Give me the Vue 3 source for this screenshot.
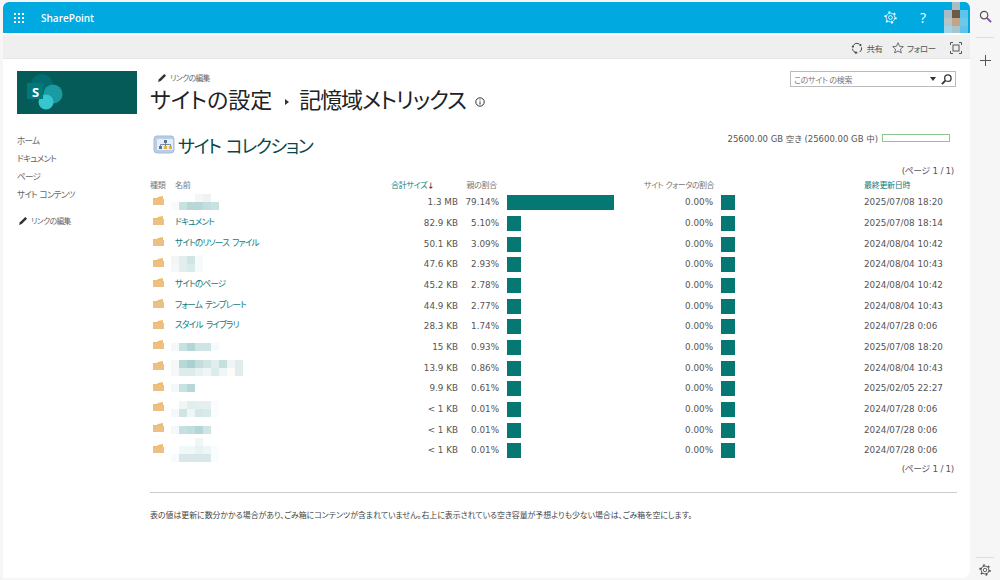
<template>
  <div class="page">
    <div class="main">
      <header class="suite">
        <svg class="waffle" width="12" height="12" viewBox="0 0 12 12" fill="#fff">
          <template v-for="y in [1, 5, 9]" :key="y">
            <rect v-for="x in [1, 5, 9]" :key="x" :x="x" :y="y" width="2" height="2" />
          </template>
        </svg>
        <span class="brand">SharePoint</span>
        <span class="spacer"></span>
        <svg width="13" height="13" viewBox="0 0 24 24" fill="none" stroke="#fff">
          <circle cx="12" cy="12" r="3.500" stroke-width="1.600" />
          <circle cx="12" cy="12" r="8" stroke-width="1.600" />
          <circle cx="12" cy="12" r="10" stroke-width="3" stroke-dasharray="3.500 6.970" />
        </svg>
        <span class="help">?</span>
        <div class="avatar">
          <div v-for="(row, r) in avatar" :key="r" class="mosaic-row">
            <i v-for="(c, k) in row" :key="k" :style="{ background: c }"></i>
          </div>
        </div>
      </header>

      <div class="ribbon">
        <svg width="12" height="12" viewBox="0 0 16 16" fill="none" stroke="#444" stroke-width="1.300">
          <path d="M3 4.500A6 6 0 0 1 11 2.500M14 7a6 6 0 0 1-2.500 6.500M8.500 14.500A6 6 0 0 1 2 9" />
          <circle cx="2.500" cy="6" r="1.500" fill="#444" stroke="none" />
          <circle cx="12.500" cy="4" r="1.500" fill="#444" stroke="none" />
          <circle cx="6.500" cy="14" r="1.500" fill="#444" stroke="none" />
        </svg>
        <span class="rb-text">共有</span>
        <svg class="star" width="12" height="12" viewBox="0 0 16 16" fill="none" stroke="#555" stroke-width="1.100">
          <path d="M8 1l2.100 4.700 5 .5-3.800 3.300 1.100 5L8 12l-4.400 2.500 1.100-5L.9 6.200l5-.5z" />
        </svg>
        <span class="rb-text">フォロー</span>
        <svg class="focus" width="12" height="12" viewBox="0 0 12 12" fill="none" stroke="#555" stroke-width="1">
          <path d="M.5 3V.5H3M9 .5h2.500V3M11.500 9v2.500H9M3 11.500H.5V9" />
          <rect x="3" y="3" width="6" height="6" />
        </svg>
      </div>

      <div class="content">
        <aside class="nav">
          <div class="logo">
            <svg width="50" height="43" viewBox="0 0 50 43">
              <circle cx="25" cy="14" r="11" fill="#036c70" />
              <circle cx="36" cy="23" r="9.500" fill="#1a9ba1" />
              <circle cx="29" cy="31" r="7.500" fill="#37c6d0" />
              <rect x="10" y="12" width="16" height="16" fill="#03787c" />
            </svg>
            <span class="logo-s">S</span>
          </div>
          <ul class="nav-list">
            <li v-for="item in navItems" :key="item">{{ item }}</li>
          </ul>
          <div class="edit nav-edit">
            <svg width="9" height="9" viewBox="0 0 10 10" fill="#333"><path d="M0 10l1-3 6-6 2 2-6 6z" /></svg>
            リンクの編集
          </div>
        </aside>

        <section class="body">
          <div class="top">
            <div class="titles">
              <div class="edit">
                <svg width="9" height="9" viewBox="0 0 10 10" fill="#333"><path d="M0 10l1-3 6-6 2 2-6 6z" /></svg>
                リンクの編集
              </div>
              <h1>
                サイトの設定
                <svg class="sep" width="4" height="6" viewBox="0 0 4 6" fill="#333"><path d="M0 0l4 3-4 3z" /></svg>
                <span class="leaf">記憶域メトリックス</span>
                <svg class="info" width="10" height="10" viewBox="0 0 10 10" fill="none" stroke="#333">
                  <circle cx="5" cy="5" r="4.200" />
                  <path d="M5 4.500V7.500M5 2.500v1" />
                </svg>
              </h1>
            </div>
            <div class="search">
              <span class="search-text">このサイト の検索</span>
              <span class="caret"></span>
              <svg width="11" height="11" viewBox="0 0 12 12" fill="none" stroke="#333" stroke-width="1.400">
                <circle cx="7.500" cy="4.500" r="3.500" />
                <path d="M5 7L1 11" stroke-width="2" />
              </svg>
            </div>
          </div>

          <div class="collection">
            <div class="coll-title">
              <svg width="22" height="22" viewBox="0 0 22 22">
                <rect x="1" y="2" width="20" height="17" rx="3" fill="#b9cde6" stroke="#a9bcd6" />
                <rect x="4" y="5" width="16" height="11" rx="1" fill="#e8eef6" />
                <rect x="11" y="6" width="3" height="3" fill="#5a7497" />
                <rect x="6" y="12" width="3" height="3" fill="#5a7497" />
                <rect x="11" y="12" width="3" height="3" fill="#e0b040" />
                <rect x="16" y="12" width="3" height="3" fill="#e0b040" />
                <path d="M12.500 9v3M7.500 12v-1.500h10V12" fill="none" stroke="#5a7497" stroke-width=".800" />
              </svg>
              <h2>サイト コレクション</h2>
            </div>
            <div class="storage">
              <span>25600.00 GB 空き (25600.00 GB 中)</span>
              <div class="storage-bar"></div>
            </div>
          </div>

          <div class="pager pager-top">(ページ 1 / 1)</div>

          <div class="row head">
            <span>種類</span>
            <span>名前</span>
            <span class="link-head size-head">合計サイズ<b>↓</b></span>
            <span class="right">親の割合</span>
            <span></span>
            <span class="right quota">サイト クォータの割合</span>
            <span></span>
            <span class="link-head">最終更新日時</span>
          </div>
          <div v-for="(row, i) in rows" :key="i" class="row">
            <svg class="folder" width="11" height="10" viewBox="0 0 11 10">
              <path d="M0 2h4l1-1 5-1v9H0z" fill="#f0bc6c" />
              <path d="M0 3h11v6H0z" fill="#ecc084" />
            </svg>
            <div class="name">
              <a v-if="row.name">{{ row.name }}</a>
              <div v-else class="mosaic">
                <div v-for="(line, r) in row.blur" :key="r" class="mosaic-row">
                  <i v-for="(c, k) in line" :key="k" :style="{ background: c }"></i>
                </div>
              </div>
            </div>
            <span class="num">{{ row.size }}</span>
            <span class="num">{{ row.pct }}</span>
            <div class="bar-cell"><div class="bar" :style="{ width: row.bar + 'px' }"></div></div>
            <span class="num">0.00%</span>
            <div class="bar-cell"><div class="bar"></div></div>
            <span class="num date">{{ row.date }}</span>
          </div>

          <div class="pager pager-bottom">(ページ 1 / 1)</div>
          <hr />
          <p class="note">表の値は更新に数分かかる場合があり、ごみ箱にコンテンツが含まれていません。右上に表示されている空き容量が予想よりも少ない場合は、ごみ箱を空にします。</p>
        </section>
      </div>
    </div>

    <div class="rail">
      <svg width="13" height="13" viewBox="0 0 14 14" fill="none" stroke="#555" stroke-width="1.300">
        <circle cx="5.500" cy="5.500" r="4" />
        <path d="M8.500 8.500L13 13" stroke="#7a4fa3" stroke-width="2" />
      </svg>
      <div class="rail-line"></div>
      <svg class="plus" width="11" height="11" viewBox="0 0 11 11" stroke="#555">
        <path d="M5.500 0v11M0 5.500h11" />
      </svg>
      <span class="spacer"></span>
      <div class="rail-line"></div>
      <svg class="rail-gear" width="12" height="12" viewBox="0 0 24 24" fill="none" stroke="#444">
        <circle cx="12" cy="12" r="3.500" stroke-width="1.600" />
        <circle cx="12" cy="12" r="8" stroke-width="1.600" />
        <circle cx="12" cy="12" r="10" stroke-width="3" stroke-dasharray="3.500 6.970" />
      </svg>
    </div>
  </div>
</template>

<script setup>
const navItems = ["ホーム", "ドキュメント", "ページ", "サイト コンテンツ"];

const avatar = [
  ["#00a9e0", "#a9bcc2", "#00a9e0"],
  ["#a7bcc4", "#6b5a48", "#5cc5ec"],
  ["#b5c4c8", "#c4a487", "#6fc8e8"],
  ["#9fd4e8", "#a6c5cf", "#60c4ea"],
];

const w = "#ffffff";
const rows = [
  { blur: [[w, w, w, "#f6f6f6", "#f2f2f2", w], ["#f7fbfb", "#c8e2e2", "#b8d8d8", "#b8d8d8", "#c2dede", "#c8e2e2"]], size: "1.3 MB", pct: "79.14%", bar: 107, date: "2025/07/08 18:20" },
  { name: "ドキュメント", size: "82.9 KB", pct: "5.10%", bar: 14, date: "2025/07/08 18:14" },
  { name: "サイトのリソース ファイル", size: "50.1 KB", pct: "3.09%", bar: 14, date: "2024/08/04 10:42" },
  { blur: [["#f4f6f6", "#e0eeee", "#cfe4e4", "#f6fafa"], ["#f4f8f8", "#e0eeee", "#d8eaea", "#f6fafa"]], size: "47.6 KB", pct: "2.93%", bar: 14, date: "2024/08/04 10:43" },
  { name: "サイトのページ", size: "45.2 KB", pct: "2.78%", bar: 14, date: "2024/08/04 10:42" },
  { name: "フォーム テンプレート", size: "44.9 KB", pct: "2.77%", bar: 14, date: "2024/08/04 10:43" },
  { name: "スタイル ライブラリ", size: "28.3 KB", pct: "1.74%", bar: 14, date: "2024/07/28 0:06" },
  { blur: [["#f5f8f8", "#c8e2e2", "#b4d6d6", "#cfe4e4", "#cfe4e4", "#f6fafa"]], size: "15 KB", pct: "0.93%", bar: 14, date: "2025/07/08 18:20" },
  { blur: [["#f5f8f8", "#b8d8d8", "#a8d2d2", "#c4dcdc", "#d0e4e4", "#e2eeee", "#c4e0e0", "#eef5f5", "#e2ecec"], ["#f5f8f8", "#dcecec", "#dcecec", "#e8f0f0", "#eef6f6", "#dcecec", "#eef6f6", "#fbfcf8", "#e2ecec"]], size: "13.9 KB", pct: "0.86%", bar: 14, date: "2024/08/04 10:43" },
  { blur: [["#f4f8f8", "#c8e2e2", "#b8d8d8"]], size: "9.9 KB", pct: "0.61%", bar: 14, date: "2025/02/05 22:27" },
  { blur: [[w, "#eef6f6", "#e0eeee", "#e4f0f0", "#e4f0f0", "#fbfdfd"], ["#f4f8f8", "#d0e4e4", "#eef6f6", "#d4e8e8", "#d8eaea", "#fafdfd"]], size: "< 1 KB", pct: "0.01%", bar: 14, date: "2024/07/28 0:06" },
  { blur: [["#f5f8f8", "#c4e0e0", "#c0dede", "#b4d6d6", "#d0e4e4"]], size: "< 1 KB", pct: "0.01%", bar: 14, date: "2024/07/28 0:06" },
  { blur: [[w, w, w, "#eef6f6", w, w], [w, "#f0f8f8", "#f0f8f8", "#e8f4f4", "#eef6f6", "#fbfdfd"], ["#f8fbfb", "#d8e8e8", "#d8e8e8", "#d8e8e8", "#d8e8e8", "#f8fdfd"]], size: "< 1 KB", pct: "0.01%", bar: 14, date: "2024/07/28 0:06" },
];
</script>

<style>
html,
body {
  margin: 0;
  background: #f6f6f6;
}
</style>

<style scoped>
.page {
  display: flex;
  width: 1000px;
  height: 580px;
  overflow: hidden;
  box-sizing: border-box;
  padding: 2px 0 2px 3px;
  background: #f6f6f6;
  color: #555;
  font-family: "DejaVu Sans", "Noto Sans CJK JP", sans-serif;
  font-size: 8.8px;
}
.main {
  width: 967px;
  display: flex;
  flex-direction: column;
  background: #fff;
  border-radius: 6px 6px 8px 0;
  overflow: hidden;
}
.spacer {
  flex: 1;
}
.suite {
  height: 31px;
  flex: none;
  display: flex;
  align-items: center;
  background: #00a9e0;
  color: #fff;
}
.waffle {
  margin-left: 10px;
}
.brand {
  margin-left: 16px;
  font: 600 10px "Open Sans", sans-serif;
}
.help {
  margin: 0 18px 0 23px;
  font: 14px "Open Sans", sans-serif;
}
.avatar {
  margin: 0 2px 0 0;
  align-self: flex-start;
  height: 31px;
  overflow: hidden;
}
.avatar .mosaic-row i {
  height: 8px;
}
.ribbon {
  margin-top: 2px;
  height: 24px;
  flex: none;
  box-sizing: border-box;
  display: flex;
  align-items: center;
  justify-content: flex-end;
  padding: 2px 8px 0 0;
  background: #efefef;
  border-bottom: 1px dotted #ddd;
}
.rb-text {
  margin-left: 3px;
  color: #555;
  font: 8.5px "Noto Sans CJK JP", sans-serif;
  font-feature-settings: "palt";
  letter-spacing: -0.3px;
}
.star {
  margin-left: 9px;
}
.focus {
  margin-left: 14px;
}
.content {
  flex: 1;
  display: flex;
  min-height: 0;
}
.nav {
  width: 147px;
  flex: none;
  box-sizing: border-box;
  padding: 12px 0 0 14px;
}
.logo {
  position: relative;
  width: 120px;
  height: 43px;
  background: #045b58;
}
.logo-s {
  position: absolute;
  left: 15px;
  top: 12px;
  color: #fff;
  font: 700 13px "Open Sans", sans-serif;
}
.nav-list {
  list-style: none;
  margin: 17px 0 0;
  padding: 0;
  font: 8.6px/18px "Noto Sans CJK JP", sans-serif;
  font-feature-settings: "palt";
  letter-spacing: -0.8px;
  word-spacing: 1.500px;
  color: #666;
}
.edit {
  display: flex;
  align-items: center;
  gap: 3px;
  color: #666;
  font: 7.8px "Noto Sans CJK JP", sans-serif;
  font-feature-settings: "palt";
  letter-spacing: -0.6px;
}
.nav-edit {
  margin: 12px 0 0 2px;
}
.body {
  width: 807px;
  flex: none;
  display: flex;
  flex-direction: column;
}
.top {
  display: flex;
  justify-content: space-between;
  align-items: flex-start;
  padding: 13px 1px 0 0;
}
.search {
  margin-top: -1px;
}
.titles .edit {
  margin-left: 8px;
}
h1 {
  margin: 0;
  display: flex;
  align-items: center;
  height: 30px;
  color: #222;
  font: 400 22px/30px "Noto Sans CJK JP", sans-serif;
  font-feature-settings: "palt";
  white-space: nowrap;
}
.leaf {
  letter-spacing: -1.100px;
}
.sep {
  margin: 7px 10px 0 13px;
}
.info {
  margin-left: 9px;
  margin-top: 8px;
}
.search {
  width: 166px;
  height: 16px;
  box-sizing: border-box;
  display: flex;
  align-items: center;
  padding: 0 3px;
  border: 1px solid #bbb;
}
.search-text {
  flex: 1;
  color: #777;
  font: 8px "Noto Sans CJK JP", sans-serif;
  font-feature-settings: "palt";
  letter-spacing: -0.3px;
}
.caret {
  margin-right: 5px;
  border: 3.500px solid transparent;
  border-top: 4px solid #333;
  border-bottom: 0;
}
.collection {
  display: flex;
  justify-content: space-between;
  align-items: flex-start;
  margin-top: 21px;
  padding-right: 7px;
}
.coll-title {
  display: flex;
  align-items: center;
  gap: 3px;
  margin-left: 3px;
}
h2 {
  margin: 0;
  color: #07484a;
  font: 400 18px/22px "Noto Sans CJK JP", sans-serif;
  font-feature-settings: "palt";
  letter-spacing: -1.400px;
  word-spacing: 2.500px;
}
.storage {
  display: flex;
  align-items: center;
  gap: 4px;
  margin-top: -2px;
  font-size: 8.5px;
}
.storage span {
  font-feature-settings: "palt";
}
.storage-bar {
  width: 68px;
  height: 8px;
  box-sizing: border-box;
  border: 1px solid #8ec78e;
}
.pager {
  padding-right: 3px;
  text-align: right;
  line-height: 12px;
  letter-spacing: -0.3px;
}
.pager-top {
  margin-top: 9px;
}
.pager-bottom {
  margin-top: 2.700px;
}
.row {
  display: grid;
  grid-template-columns: 25px 215px 69px 41px 140px 74px 150px 93px;
  grid-template-rows: 20.670px;
  height: 20.670px;
  align-items: center;
}
.row.head {
  grid-template-rows: 16px;
  height: 16px;
  margin-top: -1px;
  color: #777;
  font: 8px "Noto Sans CJK JP", sans-serif;
  font-feature-settings: "palt";
  letter-spacing: -0.3px;
}
.quota {
  letter-spacing: -0.5px;
  word-spacing: 1px;
}
.right {
  text-align: right;
  white-space: nowrap;
}
.head > .right:nth-child(4) {
  padding-right: 3px;
}
.head > span {
  white-space: nowrap;
}
.link-head {
  color: #0f7a7c;
}
.size-head {
  padding-left: 1px;
}
.size-head b {
  color: #333;
  font-size: 7px;
}
.folder {
  margin-left: 3px;
  margin-top: -3px;
}
.name a {
  display: block;
  margin-top: -4px;
  color: #0f7a7c;
  font: 8.6px "Noto Sans CJK JP", sans-serif;
  font-feature-settings: "palt";
  letter-spacing: -0.8px;
  word-spacing: 2px;
}
.mosaic {
  margin-left: -4px;
  width: max-content;
}
.mosaic-row {
  display: flex;
}
.mosaic-row i {
  display: block;
  width: 8px;
  height: 8px;
}
.num {
  text-align: right;
  padding-right: 1px;
  white-space: nowrap;
}
.date {
  text-align: left;
}
.bar-cell {
  padding-left: 7px;
  margin-top: 1px;
}
.bar {
  width: 14px;
  height: 15px;
  background: #057873;
}
hr {
  margin: 17px 0 0;
  border: 0;
  border-top: 1px solid #ccc;
}
.note {
  margin: 16px 0 0;
  color: #444;
  font: 7.900px/12px "Noto Sans CJK JP", sans-serif;
  font-feature-settings: "palt";
}
.rail {
  width: 30px;
  display: flex;
  flex-direction: column;
  align-items: center;
  padding-top: 8px;
  box-sizing: border-box;
}
.rail-line {
  width: 18px;
  margin-top: 14px;
  border-top: 1px solid #ddd;
}
.plus {
  margin-top: 17px;
}
.rail-gear {
  margin: 6px 0 2px;
}
</style>
